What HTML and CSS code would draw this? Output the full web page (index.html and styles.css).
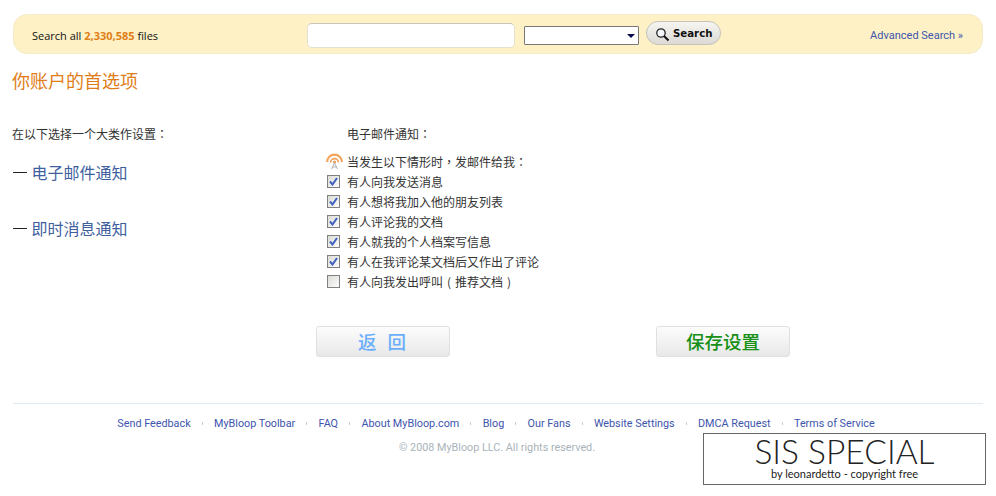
FILE: index.html
```html
<!DOCTYPE html>
<html lang="zh">
<head>
<meta charset="utf-8">
<title>MyBloop</title>
<link rel="stylesheet" href="styles.css">
</head>
<body>
<div class="page">
  <form class="searchbar">
    <div class="count">Search all <b>2,330,585</b> files</div>
    <div class="textbox"></div>
    <div class="select"><svg class="arrow" width="8" height="4" viewBox="0 0 8 4"><path d="M0 0h8L4 4z" fill="#0a0a50"/></svg></div>
    <div class="searchbtn">
      <svg class="lens" width="15" height="15" viewBox="0 0 15 15"><circle cx="6" cy="6" r="4.2" fill="#f4f8fa" stroke="#222" stroke-width="1.3"/><path d="M9 9l4.5 4.5" stroke="#111" stroke-width="2" fill="none"/></svg>
      <span>Search</span>
    </div>
    <a class="advanced">Advanced Search »</a>
  </form>

  <h1 class="title">你账户的首选项</h1>

  <div class="columns">
    <div class="left">
      <p class="intro">在以下选择一个大类作设置<span class="tc" lang="zh-TW">：</span></p>
      <div class="cat"><span class="dash"></span><a>电子邮件通知</a></div>
      <div class="cat"><span class="dash"></span><a>即时消息通知</a></div>
    </div>
    <div class="right">
      <p class="section">电子邮件通知<span class="tc" lang="zh-TW">：</span></p>
      <div class="row">
        <svg class="rss" width="17" height="17" viewBox="0 0 17 17"><path d="M1.2 9A7.3 7.3 0 0 1 15.8 9" fill="none" stroke="#f2a55a" stroke-width="2.2"/><path d="M4.6 9.5a3.9 3.9 0 0 1 7.8 0" fill="none" stroke="#efa35c" stroke-width="1.7"/><circle cx="8.5" cy="9" r="1.6" fill="#e8a060"/><path d="M8.5 10L5.5 16M8.5 10l3 6M6.5 14h4" stroke="#b0b0b0" stroke-width="1" fill="none"/></svg>
        <span>当发生以下情形时<span class="tc" lang="zh-TW">，</span>发邮件给我<span class="tc" lang="zh-TW">：</span></span>
      </div>
      <label class="row"><span class="box"><svg width="9" height="9" viewBox="0 0 9 9"><path d="M1 4.5L3.5 7.5L8 1" fill="none" stroke="#3f62c0" stroke-width="2"/></svg></span><span>有人向我发送消息</span></label>
      <label class="row"><span class="box"><svg width="9" height="9" viewBox="0 0 9 9"><path d="M1 4.5L3.5 7.5L8 1" fill="none" stroke="#3f62c0" stroke-width="2"/></svg></span><span>有人想将我加入他的朋友列表</span></label>
      <label class="row"><span class="box"><svg width="9" height="9" viewBox="0 0 9 9"><path d="M1 4.5L3.5 7.5L8 1" fill="none" stroke="#3f62c0" stroke-width="2"/></svg></span><span>有人评论我的文档</span></label>
      <label class="row"><span class="box"><svg width="9" height="9" viewBox="0 0 9 9"><path d="M1 4.5L3.5 7.5L8 1" fill="none" stroke="#3f62c0" stroke-width="2"/></svg></span><span>有人就我的个人档案写信息</span></label>
      <label class="row"><span class="box"><svg width="9" height="9" viewBox="0 0 9 9"><path d="M1 4.5L3.5 7.5L8 1" fill="none" stroke="#3f62c0" stroke-width="2"/></svg></span><span>有人在我评论某文档后又作出了评论</span></label>
      <label class="row"><span class="box"></span><span>有人向我发出呼叫<span class="paren">(</span>推荐文档<span class="paren">)</span></span></label>
    </div>
  </div>

  <div class="actions">
    <div class="btn back">返 回</div>
    <div class="btn save">保存设置</div>
  </div>

  <footer class="footer">
    <nav class="links">
      <a>Send Feedback</a><i></i><a>MyBloop Toolbar</a><i></i><a>FAQ</a><i></i><a>About MyBloop.com</a><i></i><a>Blog</a><i></i><a>Our Fans</a><i></i><a>Website Settings</a><i></i><a>DMCA Request</a><i></i><a>Terms of Service</a>
    </nav>
    <p class="copy">© 2008 MyBloop LLC. All rights reserved.</p>
  </footer>
</div>
<div class="stamp">
  <div class="stamp-title">SIS SPECIAL</div>
  <div class="stamp-sub">by leonardetto - copyright free</div>
</div>
</body>
</html>
```

FILE: styles.css
```css
html, body { margin: 0; padding: 0; background: #fff; }
body {
  font-family: "Open Sans", "Noto Sans CJK SC", sans-serif;
  font-size: 11px;
  color: #222;
  overflow: hidden;
}
p, h1 { margin: 0; }
a { color: #3d55ad; text-decoration: none; }
.tc { font-family: "Noto Sans CJK TC", sans-serif; }
.paren { display: inline-block; width: 12px; text-align: center; }

.page { width: 971px; height: 496px; padding: 14px 0 0 12px; box-sizing: content-box; }

.searchbar {
  display: flex; align-items: center;
  margin-left: 1px; width: 970px; height: 40px; box-sizing: border-box; padding-top: 2px;
  background: #fef1c6;
  border: 1px solid #f5ebc8; border-radius: 14px;
}
.count { width: 275px; padding-left: 18px; box-sizing: content-box; color: #111; white-space: nowrap; }
.count b { color: #e07f16; font-weight: 700; }
.textbox {
  width: 208px; height: 25px; box-sizing: border-box; background: #fff;
  border: 1px solid #e3e0d0; border-top-color: #c8c6bc; border-radius: 5px;
}
.select {
  position: relative; margin: 0 0 0 9px; width: 115px; height: 19px; box-sizing: border-box;
  background: #fff; border: 1px solid #777; border-radius: 1px;
  display: flex; align-items: center; justify-content: flex-end; padding-right: 3px;
}
.arrow { margin-top: 2px; }
.searchbtn {
  display: flex; align-items: center; gap: 3px;
  margin: -4px 0 0 7px; width: 75px; height: 24px; box-sizing: border-box; padding-left: 8px;
  background: linear-gradient(#f6f5f1, #dcdad4);
  border: 1px solid #c4c2ba; border-radius: 12px;
  font-family: "DejaVu Sans", sans-serif; font-weight: 700; font-size: 10.2px; color: #111;
}
.lens { margin-top: 2px; }
.advanced { margin-left: auto; margin-right: 19px; font-family: Roboto, sans-serif; font-size: 11px; }

.title {
  margin-top: 13px; height: 26px; line-height: 26px;
  font-size: 18px; font-weight: 400; color: #e07d18;
  font-family: "Noto Sans CJK SC", sans-serif;
}

.columns { display: flex; margin-top: 32px; font-family: "Noto Sans CJK SC", sans-serif; font-size: 12px; }
.left { width: 314px; }
.intro { height: 18px; line-height: 18px; color: #333; }
.cat { display: flex; align-items: center; height: 24px; margin-top: 17px; margin-bottom: 32px; font-size: 16px; }
.cat + .cat { margin-top: 0; }
.dash { width: 14px; height: 1px; background: #222; margin: 0 4.5px 0 1px; }
.cat a { color: #3f5f9f; }

.section { height: 18px; line-height: 18px; margin: 0 0 8px 21px; color: #333; }
.row { display: flex; align-items: center; height: 20px; color: #333; }
.rss { width: 17px; margin-right: 4px; }
.box {
  display: flex; align-items: center; justify-content: center;
  width: 13px; height: 13px; box-sizing: border-box; margin: 0 7px 0 1px;
  border: 1px solid #808080; background: linear-gradient(135deg, #dcdcd6, #fbfbfb);
}

.actions { display: flex; gap: 206px; margin: 35px 0 0 304px; }
.btn {
  width: 134px; height: 31px; box-sizing: border-box; padding-bottom: 2px;
  display: flex; align-items: center; justify-content: center;
  background: linear-gradient(#fcfcfc, #e8e8e8);
  border: 1px solid #e0e0e0; border-radius: 3px;
  font-family: "Noto Sans CJK SC", sans-serif; font-size: 18.5px; font-weight: 500;
}
.back { color: #6aaefc; word-spacing: 7px; padding-right: 2px; }
.save { color: #169016; }

.footer { margin: 46px 0 0 1px; width: 970px; border-top: 1px solid #e1eaf0; font-family: Roboto, sans-serif; font-size: 10.8px; }
.links { display: flex; justify-content: center; align-items: center; height: 20px; margin-top: 9px; padding-right: 4px; }
.links i { width: 1px; height: 3px; background: #ccc; margin: 0 11.2px; }
.copy { text-align: center; margin-top: 6px; padding-right: 2px; color: #a9b3ba; line-height: 18px; }

.stamp {
  position: absolute; left: 703px; top: 433px; width: 283px; height: 52px; box-sizing: border-box;
  background: #fff; border: 1px solid #666; text-align: center; color: #222;
  font-family: "Lato", sans-serif;
}
.stamp-title { font-size: 33.5px; font-weight: 300; line-height: 33px; margin-top: 1px; }
.stamp-sub { font-size: 11px; line-height: 13px; margin-top: -1px; }
```
